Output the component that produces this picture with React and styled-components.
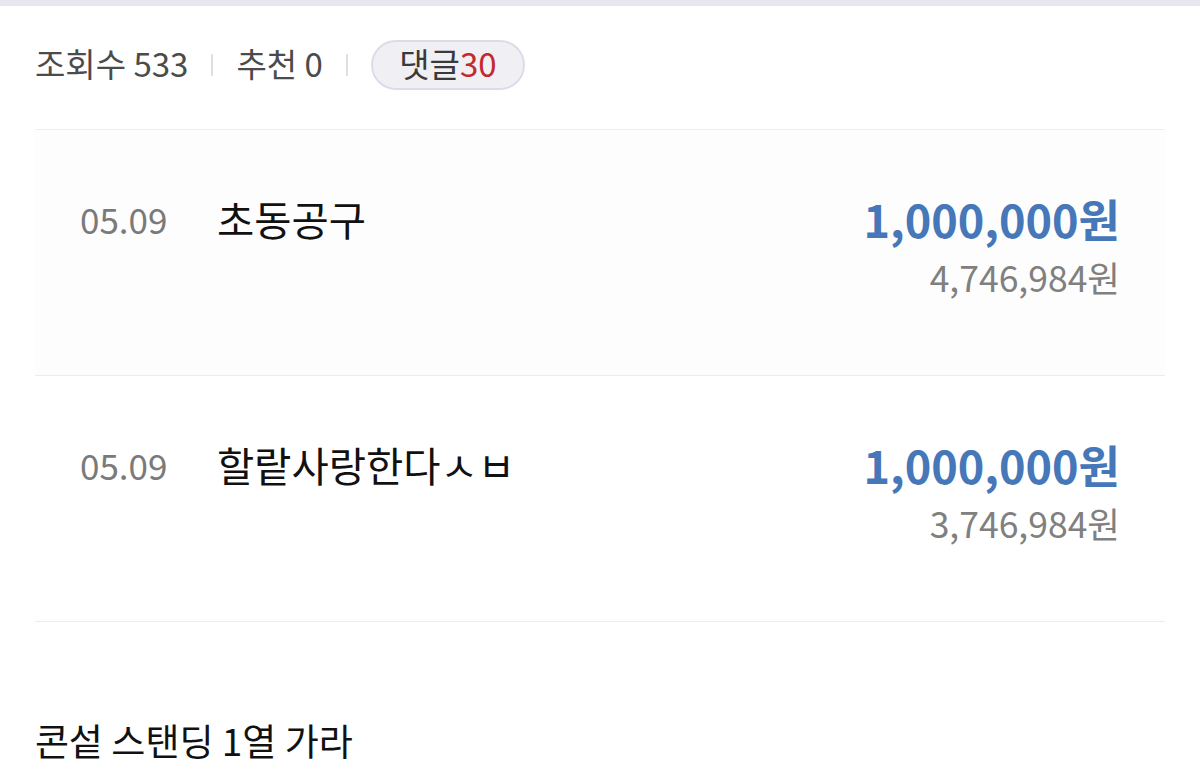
import React from 'react';
import styled, { createGlobalStyle } from 'styled-components';

const GlobalStyle = createGlobalStyle`
  html, body {
    margin: 0;
    padding: 0;
    background: #ffffff;
  }
  body {
    font-family: "Noto Sans CJK KR", "Noto Sans", sans-serif;
    color: #111;
  }
`;

const Page = styled.div`
  width: 1200px;
  min-height: 783px;
  border-top: 6px solid #e6e6ef;
  box-sizing: border-box;
  padding: 34px 35px 0 35px;
`;

const Stats = styled.div`
  display: flex;
  align-items: center;
  height: 50px;
  font-size: 33px;
  color: #4b4b4b;
`;

const StatText = styled.span`
  line-height: 44px;
  padding-bottom: 5px;
`;

const Sep = styled.span`
  width: 2px;
  height: 22px;
  background: #dedee6;
  margin: 0 23px;
`;

const Pill = styled.div`
  display: flex;
  align-items: center;
  justify-content: center;
  box-sizing: border-box;
  width: 154px;
  height: 50px;
  padding-bottom: 4px;
  border: 2px solid #dcdce8;
  border-radius: 25px;
  background: #f0f0f4;
  color: #3a3a3a;
  line-height: 42px;
`;

const Red = styled.span`
  color: #c4292d;
`;

const List = styled.div`
  margin-top: 39px;
  border-top: 1px solid #f0f0f0;
`;

const Row = styled.div`
  display: flex;
  justify-content: space-between;
  align-items: flex-start;
  box-sizing: border-box;
  height: 246px;
  padding: 61px 45px 0 45px;
  border-bottom: 1px solid #ececec;
  background: ${p => (p.$tint ? '#fdfdfd' : '#ffffff')};
`;

const Left = styled.div`
  display: flex;
  align-items: flex-start;
`;

const DateText = styled.span`
  font-size: 35px;
  line-height: 56px;
  color: #7a7a7a;
  width: 137px;
`;

const Title = styled.span`
  font-size: 40.5px;
  line-height: 56px;
  color: #111;
`;

const Right = styled.div`
  display: flex;
  flex-direction: column;
  align-items: flex-end;
`;

const Amount = styled.span`
  font-size: 45px;
  line-height: 56px;
  font-weight: 700;
  color: #4677b8;
`;

const Total = styled.span`
  margin-top: 8px;
  font-size: 35.5px;
  line-height: 44px;
  color: #808080;
`;

const NextTitle = styled.div`
  margin-top: 94px;
  font-size: 37px;
  line-height: 48px;
  color: #111;
`;

const rows = [
  { date: '05.09', title: '초동공구', amount: '1,000,000원', total: '4,746,984원', tint: true },
  { date: '05.09', title: '할랕사랑한다ㅅㅂ', amount: '1,000,000원', total: '3,746,984원' },
];

export default function App() {
  return (
    <>
      <GlobalStyle />
      <Page>
        <Stats>
          <StatText>조회수 533</StatText>
          <Sep />
          <StatText>추천 0</StatText>
          <Sep />
          <Pill>
            댓글<Red>30</Red>
          </Pill>
        </Stats>
        <List>
          {rows.map((r, i) => (
            <Row key={i} $tint={r.tint}>
              <Left>
                <DateText>{r.date}</DateText>
                <Title>{r.title}</Title>
              </Left>
              <Right>
                <Amount>{r.amount}</Amount>
                <Total>{r.total}</Total>
              </Right>
            </Row>
          ))}
        </List>
        <NextTitle>콘섵 스탠딩 1열 가라</NextTitle>
      </Page>
    </>
  );
}
